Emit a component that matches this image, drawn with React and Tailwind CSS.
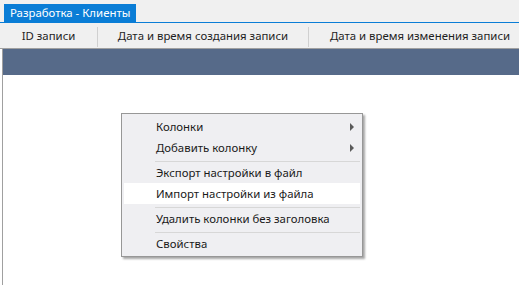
import React from "react";

function Arrow() {
  return (
    <span className="ml-auto mr-[6px] block h-0 w-0 border-y-[4px] border-l-[4px] border-y-transparent border-l-[#5a5a5a]" />
  );
}

function Item({ children, sub, active }) {
  return (
    <div
      className={
        "flex h-[21px] items-center whitespace-nowrap pl-[32px] " +
        (active ? "bg-white" : "")
      }
    >
      <span>{children}</span>
      {sub ? <Arrow /> : null}
    </div>
  );
}

function Sep() {
  return <div className="ml-[31px] mt-[3px] h-px bg-[#d7d7d7]" />;
}

export default function App() {
  return (
    <div
      className="relative h-[285px] w-[519px] overflow-hidden bg-white text-[11.4px] text-[#1e1e1e]"
      style={{ fontFamily: '"Noto Sans", "Open Sans", sans-serif' }}
    >
      {/* tab strip */}
      <div className="flex h-[22px] items-end bg-[#f0f0f0] pl-[4px]">
        <div className="flex h-[18px] w-[132px] items-center whitespace-nowrap pl-[6px] text-[11.4px] text-white bg-[#0a7dd6]">
          Разработка - Клиенты
        </div>
      </div>
      <div className="h-px bg-[#0a7dd6]" />
      {/* header row */}
      <div className="flex h-[26px] whitespace-nowrap border-b border-[#a0a0a0] bg-[#f0f0f0]">
        <div className="flex w-[97px] shrink-0 items-center justify-center">ID записи</div>
        <div className="mt-[4px] h-[20px] w-px shrink-0 bg-[#d0d0d0]" />
        <div className="flex w-[210px] shrink-0 items-center justify-center">
          Дата и время создания записи
        </div>
        <div className="mt-[4px] h-[20px] w-px shrink-0 bg-[#d0d0d0]" />
        <div className="flex w-[222px] shrink-0 items-center justify-center">
          Дата и время изменения записи
        </div>
      </div>
      {/* grid body */}
      <div className="ml-[2px] h-[236px] border-l border-[#a0a0a0]">
        <div className="h-[26px] bg-[#566a89]" />
      </div>

      {/* context menu */}
      <div className="absolute left-[121px] top-[113px] w-[242px] border border-[#979797] bg-[#efeff2] p-[2px] text-[#1a1a1a] shadow-[2px_2px_2px_rgba(0,0,0,0.35)]">
        <Item sub>Колонки</Item>
        <Item sub>Добавить колонку</Item>
        <Sep />
        <Item>Экспорт настройки в файл</Item>
        <Item active>Импорт настройки из файла</Item>
        <Sep />
        <Item>Удалить колонки без заголовка</Item>
        <Sep />
        <Item>Свойства</Item>
      </div>
    </div>
  );
}
